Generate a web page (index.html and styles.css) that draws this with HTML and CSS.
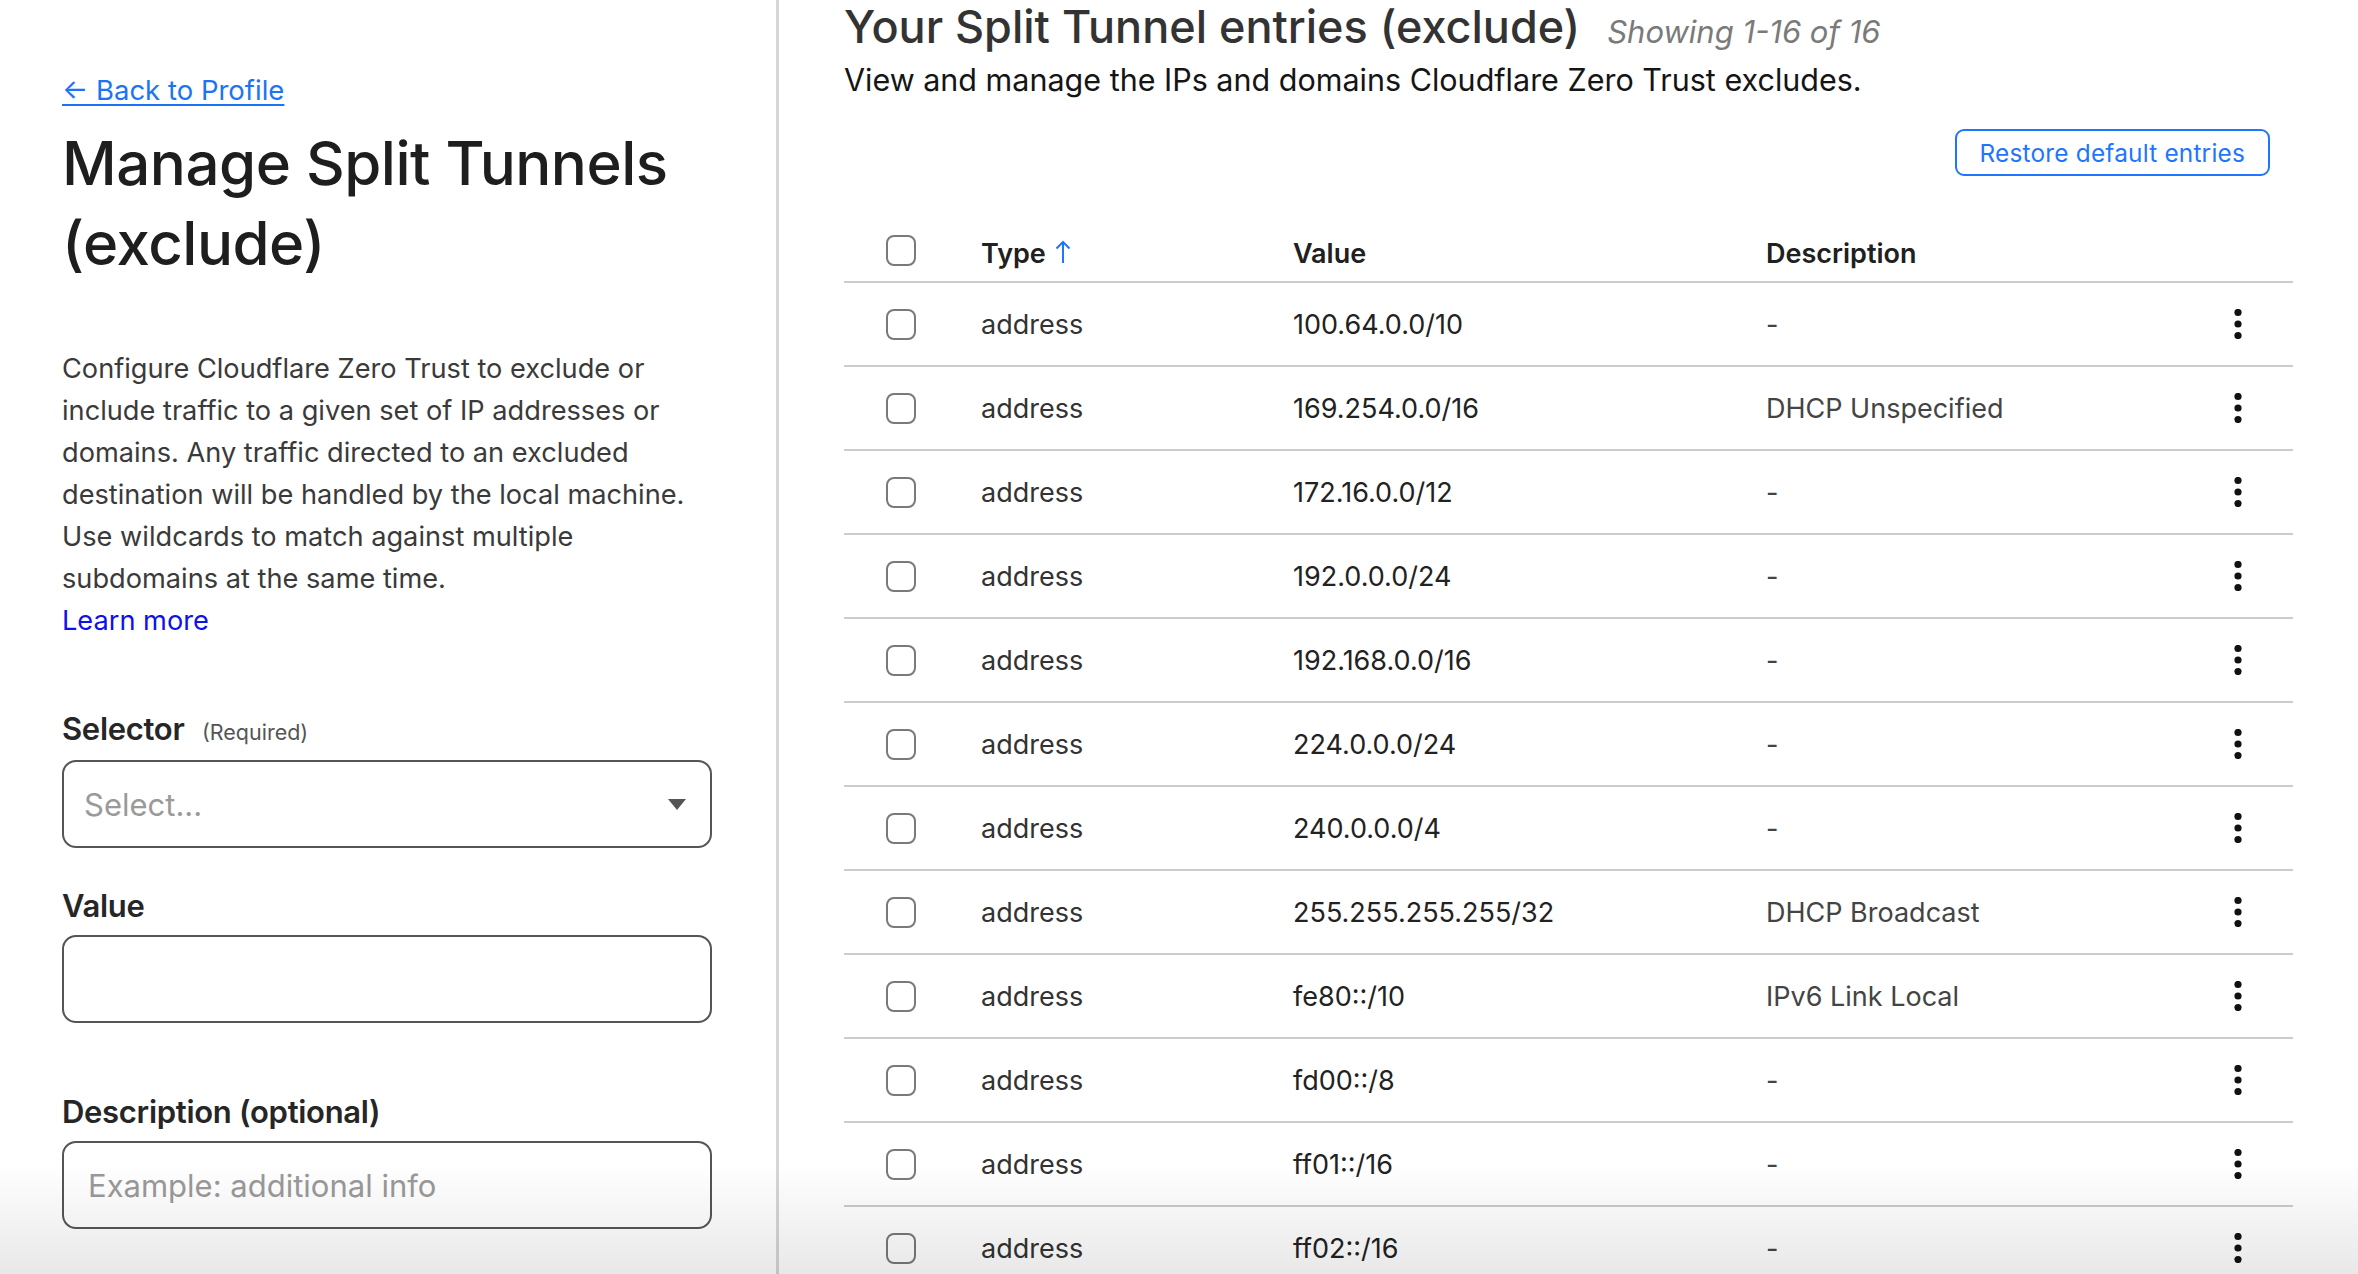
FILE: index.html
```html
<!DOCTYPE html>
<html lang="en">
<head>
<meta charset="utf-8">
<title>Manage Split Tunnels (exclude)</title>
<link rel="stylesheet" href="styles.css">
</head>
<body>
<div class="page">
  <aside class="side">
    <a class="back" href="#">← Back to Profile</a>
    <h1 class="side-title">Manage Split Tunnels (exclude)</h1>
    <p class="intro">Configure Cloudflare Zero Trust to exclude or<br>include traffic to a given set of IP addresses or<br>domains. Any traffic directed to an excluded<br>destination will be handled by the local machine.<br>Use wildcards to match against multiple<br>subdomains at the same time.</p>
    <a class="learn" href="#">Learn more</a>

    <div class="field field-selector">
      <div class="label">Selector <span class="req">(Required)</span></div>
      <div class="box select-box">
        <span class="placeholder">Select...</span>
        <svg class="caret" width="18" height="11" viewBox="0 0 18 11"><path d="M0 0H18L9 11Z" fill="#555"/></svg>
      </div>
    </div>

    <div class="field field-value">
      <div class="label">Value</div>
      <div class="box"></div>
    </div>

    <div class="field field-desc">
      <div class="label">Description (optional)</div>
      <div class="box"><span class="placeholder ph-desc">Example: additional info</span></div>
    </div>
  </aside>

  <main class="main">
    <div class="head">
      <h2 class="main-title">Your Split Tunnel entries (exclude)</h2>
      <span class="showing">Showing 1-16 of 16</span>
    </div>
    <p class="sub">View and manage the IPs and domains Cloudflare Zero Trust excludes.</p>
    <div class="actions">
      <button class="restore" type="button">Restore default entries</button>
    </div>

    <div class="table">
      <div class="row header">
        <span class="cb"></span>
        <span class="th">Type <svg class="sort" width="16" height="24" viewBox="0 0 16 24"><path d="M8 23V2M1.5 8.5L8 2l6.5 6.5" fill="none" stroke="#1f75fe" stroke-width="2"/></svg></span>
        <span class="th">Value</span>
        <span class="th">Description</span>
        <span></span>
      </div>

      <div class="row"><span class="cb"></span><span class="td">address</span><span class="td val">100.64.0.0/10</span><span class="td desc">-</span><span class="kebab"><svg width="8" height="30" viewBox="0 0 8 30"><circle cx="4" cy="3.5" r="3.6"/><circle cx="4" cy="15" r="3.6"/><circle cx="4" cy="26.5" r="3.6"/></svg></span></div>
      <div class="row"><span class="cb"></span><span class="td">address</span><span class="td val">169.254.0.0/16</span><span class="td desc">DHCP Unspecified</span><span class="kebab"><svg width="8" height="30" viewBox="0 0 8 30"><circle cx="4" cy="3.5" r="3.6"/><circle cx="4" cy="15" r="3.6"/><circle cx="4" cy="26.5" r="3.6"/></svg></span></div>
      <div class="row"><span class="cb"></span><span class="td">address</span><span class="td val">172.16.0.0/12</span><span class="td desc">-</span><span class="kebab"><svg width="8" height="30" viewBox="0 0 8 30"><circle cx="4" cy="3.5" r="3.6"/><circle cx="4" cy="15" r="3.6"/><circle cx="4" cy="26.5" r="3.6"/></svg></span></div>
      <div class="row"><span class="cb"></span><span class="td">address</span><span class="td val">192.0.0.0/24</span><span class="td desc">-</span><span class="kebab"><svg width="8" height="30" viewBox="0 0 8 30"><circle cx="4" cy="3.5" r="3.6"/><circle cx="4" cy="15" r="3.6"/><circle cx="4" cy="26.5" r="3.6"/></svg></span></div>
      <div class="row"><span class="cb"></span><span class="td">address</span><span class="td val">192.168.0.0/16</span><span class="td desc">-</span><span class="kebab"><svg width="8" height="30" viewBox="0 0 8 30"><circle cx="4" cy="3.5" r="3.6"/><circle cx="4" cy="15" r="3.6"/><circle cx="4" cy="26.5" r="3.6"/></svg></span></div>
      <div class="row"><span class="cb"></span><span class="td">address</span><span class="td val">224.0.0.0/24</span><span class="td desc">-</span><span class="kebab"><svg width="8" height="30" viewBox="0 0 8 30"><circle cx="4" cy="3.5" r="3.6"/><circle cx="4" cy="15" r="3.6"/><circle cx="4" cy="26.5" r="3.6"/></svg></span></div>
      <div class="row"><span class="cb"></span><span class="td">address</span><span class="td val">240.0.0.0/4</span><span class="td desc">-</span><span class="kebab"><svg width="8" height="30" viewBox="0 0 8 30"><circle cx="4" cy="3.5" r="3.6"/><circle cx="4" cy="15" r="3.6"/><circle cx="4" cy="26.5" r="3.6"/></svg></span></div>
      <div class="row"><span class="cb"></span><span class="td">address</span><span class="td val">255.255.255.255/32</span><span class="td desc">DHCP Broadcast</span><span class="kebab"><svg width="8" height="30" viewBox="0 0 8 30"><circle cx="4" cy="3.5" r="3.6"/><circle cx="4" cy="15" r="3.6"/><circle cx="4" cy="26.5" r="3.6"/></svg></span></div>
      <div class="row"><span class="cb"></span><span class="td">address</span><span class="td val">fe80::/10</span><span class="td desc">IPv6 Link Local</span><span class="kebab"><svg width="8" height="30" viewBox="0 0 8 30"><circle cx="4" cy="3.5" r="3.6"/><circle cx="4" cy="15" r="3.6"/><circle cx="4" cy="26.5" r="3.6"/></svg></span></div>
      <div class="row"><span class="cb"></span><span class="td">address</span><span class="td val">fd00::/8</span><span class="td desc">-</span><span class="kebab"><svg width="8" height="30" viewBox="0 0 8 30"><circle cx="4" cy="3.5" r="3.6"/><circle cx="4" cy="15" r="3.6"/><circle cx="4" cy="26.5" r="3.6"/></svg></span></div>
      <div class="row"><span class="cb"></span><span class="td">address</span><span class="td val">ff01::/16</span><span class="td desc">-</span><span class="kebab"><svg width="8" height="30" viewBox="0 0 8 30"><circle cx="4" cy="3.5" r="3.6"/><circle cx="4" cy="15" r="3.6"/><circle cx="4" cy="26.5" r="3.6"/></svg></span></div>
      <div class="row"><span class="cb"></span><span class="td">address</span><span class="td val">ff02::/16</span><span class="td desc">-</span><span class="kebab"><svg width="8" height="30" viewBox="0 0 8 30"><circle cx="4" cy="3.5" r="3.6"/><circle cx="4" cy="15" r="3.6"/><circle cx="4" cy="26.5" r="3.6"/></svg></span></div>
    </div>
  </main>
</div>
<div class="fade"></div>
</body>
</html>
```
FILE: styles.css
```css
* { box-sizing: border-box; }
html, body {
  margin: 0;
  padding: 0;
  height: 100%;
  overflow: hidden;
  background: #fff;
}
body {
  font-family: Inter, "Noto Sans", "Liberation Sans", sans-serif;
  color: #222;
}
.page {
  display: flex;
  height: 1274px;
  overflow: hidden;
}
.side {
  width: 779px;
  flex: none;
  border-right: 3px solid #d6d6d6;
  padding: 72px 0 0 62px;
  display: flex;
  flex-direction: column;
  align-items: flex-start;
}
.back {
  font-size: 27.5px;
  line-height: 36px;
  color: #1b74f5;
  text-decoration: underline;
  text-underline-offset: 4px;
  text-decoration-thickness: 2px;
}
.side-title {
  margin: 15px 0 0;
  font-size: 60px;
  line-height: 80px;
  font-weight: 500;
  color: #1e1e1e;
  width: 660px;
  letter-spacing: -0.5px;
}
.intro {
  margin: 65px 0 0;
  width: 700px;
  font-size: 27.2px;
  line-height: 42px;
  color: #3a3a3a;
}
.learn {
  font-size: 27.2px;
  line-height: 42px;
  color: #1010ee;
  text-decoration: none;
}
.field { width: 650px; }
.field-selector { margin-top: 68px; }
.field-value { margin-top: 39px; }
.field-desc { margin-top: 70px; }
.label {
  font-size: 31px;
  line-height: 38px;
  font-weight: 600;
  color: #262626;
  letter-spacing: -0.3px;
  margin-bottom: 9px;
}
.field-value .label,
.field-desc .label { margin-bottom: 10px; }
.req {
  font-size: 21.5px;
  font-weight: 400;
  color: #555;
  margin-left: 10px;
  letter-spacing: 0;
}
.box {
  height: 88px;
  border: 2.5px solid #555;
  border-radius: 14px;
  display: flex;
  align-items: center;
  padding: 0 20px;
}
.select-box { justify-content: space-between; }
.placeholder {
  font-size: 31px;
  color: #9a9a9a;
}
.ph-desc { padding-left: 4px; }
.caret { margin-right: 4px; }

.main {
  flex: 1;
  padding: 0 65px 0 65px;
  min-width: 0;
}
.head {
  display: flex;
  align-items: baseline;
  gap: 27px;
  height: 54px;
}
.main-title {
  margin: 0;
  font-size: 45px;
  line-height: 54px;
  font-weight: 500;
  color: #333;
}
.showing {
  font-size: 31px;
  font-style: italic;
  color: #7a7a7a;
}
.sub {
  margin: 4px 0 0;
  font-size: 30.5px;
  line-height: 44px;
  color: #151515;
}
.actions {
  display: flex;
  justify-content: flex-end;
  padding-right: 23px;
  margin-top: 27px;
}
.restore {
  height: 47px;
  padding: 0 23px;
  border: 2px solid #1f75fe;
  border-radius: 9px;
  background: #fff;
  color: #1f75fe;
  font-family: inherit;
  font-size: 24.4px;
  letter-spacing: 0.2px;
}
.table {
  margin-top: 34px;
}
.row {
  display: grid;
  grid-template-columns: 95px 312px 473px 1fr 40px;
  align-items: center;
  padding: 0 35px 0 42px;
  height: 84px;
  border-bottom: 2.5px solid #cccccc;
  font-size: 27px;
  color: #333;
}
.row.header {
  height: 73px;
  padding-top: 15px;
}
.th {
  font-weight: 600;
  color: #202020;
  display: flex;
  align-items: center;
  gap: 9px;
}
.sort { margin-top: -2px; }
.cb {
  width: 30px;
  height: 31px;
  border: 2px solid #7a7a7a;
  border-radius: 8px;
  background: #fff;
}
.header .cb { margin-top: -6px; }
.td.val { color: #222; }
.td.desc { color: #444; }
.kebab {
  display: flex;
  justify-content: center;
  fill: #111;
}
.fade {
  position: fixed;
  left: 0;
  right: 0;
  bottom: 0;
  height: 110px;
  background: linear-gradient(to bottom, rgba(0,0,0,0), rgba(0,0,0,0.09));
  pointer-events: none;
}
```
